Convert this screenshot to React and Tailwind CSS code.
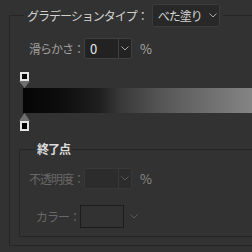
import React from 'react';

const font = { fontFamily: '"Noto Sans CJK JP", "Noto Sans", sans-serif' };

const Chevron = ({ color = '#a8a8a8' }) => (
    <svg width="8" height="5" viewBox="0 0 8 5" fill="none">
        <path d="M0.5 0.5 L4 4 L7.5 0.5" stroke={color} strokeWidth="1" />
    </svg>
);

const TopStop = () => (
    <svg width="11" height="16" viewBox="0 0 11 16">
        <rect x="1" y="0" width="9" height="9" fill="#e4e4e4" />
        <rect x="3" y="2" width="5" height="5" fill="#000" />
        <polygon points="0,9 11,9 5.5,16" fill="#6f6f6f" />
    </svg>
);

const BottomStop = () => (
    <svg width="11" height="18" viewBox="0 0 11 18">
        <polygon points="5.5,0 0,8 11,8" fill="#6f6f6f" />
        <rect x="1" y="8" width="9" height="10" fill="#e4e4e4" />
        <rect x="3" y="10" width="5" height="6" fill="#000" />
    </svg>
);

const NumberBox = ({ value, disabled }) => (
    <div className={`flex h-[21px] w-[48px] rounded-[2px] border ${disabled ? 'border-[#383838] bg-[#2c2c2c]' : 'border-[#404040] bg-[#222222]'}`}>
        <div className="flex flex-1 items-center pl-[5px] text-[13px] text-[#e8e8e8]">{value}</div>
        <div className={`flex w-[13px] items-center justify-center border-l ${disabled ? 'border-[#383838]' : 'border-[#404040]'}`}>
            <Chevron color={disabled ? '#5c5c5c' : '#a8a8a8'} />
        </div>
    </div>
);

export default function App() {
    return (
        <div className="h-[252px] w-[252px] overflow-hidden bg-[#323232] pl-[9px] pt-[4px] text-[12px] tracking-[-1px]" style={font}>
            <fieldset className="h-[242px] w-[262px] border border-[#262626]">
                <legend className="ml-[14px] px-[3px]">
                    <div className="flex h-[23px] items-center">
                        <span className="text-[#d2d2d2]">グラデーションタイプ：</span>
                        <div className="ml-[4px] flex h-[23px] w-[68px] items-center rounded-[2px] border border-[#3c3c3c] bg-[#282828] pl-[5px]">
                            <span className="text-[#d6d6d6]">べた塗り</span>
                            <span className="ml-[7px]"><Chevron /></span>
                        </div>
                    </div>
                </legend>

                <div className="mt-[11px] flex items-center">
                    <span className="w-[74px] text-right text-[#a0a0a0]">滑らかさ：</span>
                    <NumberBox value="0" />
                    <span className="ml-[8px] text-[13px] tracking-normal text-[#a8a8a8]">%</span>
                </div>

                <div className="mt-[13px] flex flex-col">
                    <div className="ml-[9px] flex h-[16px]"><TopStop /></div>
                    <div className="ml-[13px] h-[25px] bg-[linear-gradient(to_right,#050505_0px,#0d0d0d_37px,#1f1f1f_77px,#383838_97px,#555555_137px,#6a6a6a_177px,#848484_229px)]" />
                    <div className="ml-[9px] -mt-[0px] flex h-[18px]"><BottomStop /></div>
                </div>

                <fieldset className="ml-[9px] mt-[9px] h-[97px] border border-[#262626]">
                    <legend className="ml-[15px] px-[2px] font-bold text-[#dcdcdc]">終了点</legend>

                    <div className="mt-[10px] flex items-center">
                        <span className="w-[64px] text-right text-[#686868]">不透明度：</span>
                        <NumberBox value="" disabled />
                        <span className="ml-[8px] text-[13px] tracking-normal text-[#8a8a8a]">%</span>
                    </div>

                    <div className="mt-[16px] flex items-center">
                        <span className="w-[60px] text-right text-[#686868]">カラー：</span>
                        <div className="h-[23px] w-[44px] border border-[#1c1c1c]" />
                        <span className="ml-[6px]"><Chevron color="#5c5c5c" /></span>
                    </div>
                </fieldset>
            </fieldset>
        </div>
    );
}
